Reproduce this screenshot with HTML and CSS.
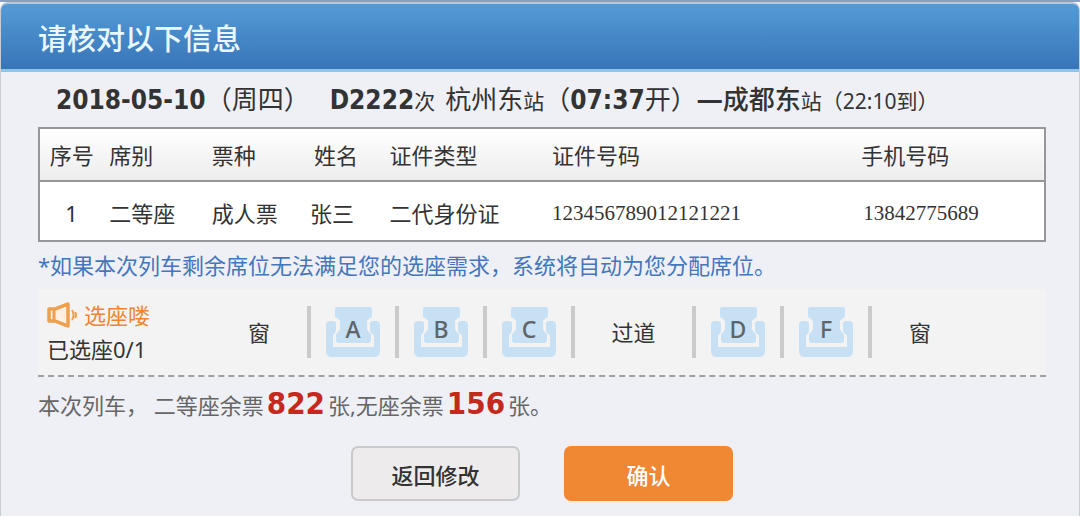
FILE: index.html
```html
<!DOCTYPE html>
<html lang="zh-CN">
  <head>
    <meta charset="UTF-8" />
    <title>请核对以下信息</title>
    <link rel="stylesheet" href="styles.css">
  </head>
  <body>
    <svg class="symbols" aria-hidden="true">
      <symbol id="seat" viewBox="0 0 54 50">
        <path d="M10 0h34q2 0 2 2v8q-4 2-5 4v8q1 3 4 5v6q0 3-3 3H13q-3 0-3-3v-6q3-2 4-5v-8q-1-2-5-4V2q0-2 2-2z" />
        <path d="M4 14h3q3 0 3 3v6q0 3-3 5v12h41V28q-4-2-4-5v-6q0-3 3-3h3q4 0 4 4v26q0 6-6 6H6q-6 0-6-6V18q0-4 4-4z" />
      </symbol>
    </svg>

    <main class="dialog">
      <h1 class="dialog-title">请核对以下信息</h1>

      <div class="dialog-body">
        <p class="train">
          <b>2018-05-10</b><span class="big">（周四）</span><b class="train-no">D2222</b><span>次</span>
          <span class="big from">杭州东</span><span>站</span><span class="big">（</span><b>07:37</b><span class="big">开）</span><span class="big dash">—</span><span class="big to">成都东</span><span>站（22:10到）</span>
        </p>

        <table class="passengers">
          <thead>
            <tr>
              <th class="col-no">序号</th>
              <th class="col-seat">席别</th>
              <th class="col-ticket">票种</th>
              <th class="col-name">姓名</th>
              <th class="col-type">证件类型</th>
              <th class="col-id">证件号码</th>
              <th>手机号码</th>
            </tr>
          </thead>
          <tbody>
            <tr>
              <td class="col-no">1</td>
              <td>二等座</td>
              <td>成人票</td>
              <td>张三</td>
              <td>二代身份证</td>
              <td class="number">123456789012121221</td>
              <td class="number phone">13842775689</td>
            </tr>
          </tbody>
        </table>

        <p class="notice">*如果本次列车剩余席位无法满足您的选座需求，系统将自动为您分配席位。</p>

        <section class="choose">
          <div class="choose-info">
            <p class="choose-title">
              <svg class="speaker" viewBox="0 0 30 26" aria-hidden="true">
                <path d="M2 7h6L21 2v22L8 19H2z" fill="#fdf0e0" />
                <path d="M2 7h6L21 2v22L8 19H2zM7 7v12" />
                <path class="wave" d="M25 8q3 5 0 10M28 10q2 3 0 6" />
              </svg>
              选座喽
            </p>
            <p>已选座0/1</p>
          </div>
          <div class="seats">
            <span class="window">窗</span>
            <div class="seat-group">
              <button type="button" class="seat"><svg aria-hidden="true"><use href="#seat" /></svg><span>A</span></button>
              <button type="button" class="seat"><svg aria-hidden="true"><use href="#seat" /></svg><span>B</span></button>
              <button type="button" class="seat"><svg aria-hidden="true"><use href="#seat" /></svg><span>C</span></button>
            </div>
            <span class="aisle">过道</span>
            <div class="seat-group">
              <button type="button" class="seat"><svg aria-hidden="true"><use href="#seat" /></svg><span>D</span></button>
              <button type="button" class="seat"><svg aria-hidden="true"><use href="#seat" /></svg><span>F</span></button>
            </div>
            <span class="window">窗</span>
          </div>
        </section>

        <p class="remain">本次列车， 二等座余票<strong>822</strong>张,无座余票<strong>156</strong>张。</p>

        <div class="buttons">
          <button type="button" class="btn">返回修改</button>
          <button type="button" class="btn btn-ok">确认</button>
        </div>
      </div>
    </main>

    <script>
      const seats = document.querySelectorAll('.seat');

      seats.forEach((seat) => {
        seat.addEventListener('click', () => {
          seats.forEach((other) => other.classList.remove('selected'));
          seat.classList.add('selected');
        });
      });
    </script>
  </body>
</html>
```
FILE: styles.css
```css
* {
  box-sizing: border-box;
}

body {
  margin: 0;
  background-color: #fff;
  border-top: 2px solid #8b9fbf;
  font-family: "Noto Sans", "Noto Sans CJK SC", sans-serif;
  font-size: 22px;
  line-height: 32px;
  color: #333;
}

p {
  margin: 0;
}

button {
  font-family: inherit;
  font-size: 22px;
  cursor: pointer;
}

.symbols {
  display: none;
}

.dialog {
  border: 1px solid #c8ccd4;
  border-top: 2px solid #b9c8d9;
  border-bottom: none;
  border-radius: 8px 8px 0 0;
  background-color: #eff0f6;
}

.dialog-title {
  margin: 0;
  padding: 4px 37px 0;
  border-bottom: 3px solid #8fc6e6;
  border-radius: 6px 6px 0 0;
  background: linear-gradient(#559bd6, #3775b8);
  color: #e9f8ff;
  font-size: 29px;
  font-weight: 500;
  line-height: 61px;
}

.dialog-body {
  padding: 8px 33px 15px 37px;
}

.train {
  display: flex;
  flex-wrap: wrap;
  align-items: baseline;
  padding-left: 18px;
  line-height: 38px;
  font-size: 21px;
}

.train b,
.remain strong {
  font-family: "DejaVu Sans Condensed", "DejaVu Sans", sans-serif;
}

.train b {
  font-size: 26px;
}

.big {
  font-size: 26px;
}

.train-no {
  margin-left: 20px;
}

.from {
  margin-left: 10px;
}

.dash {
  font-weight: bold;
}

.to {
  font-weight: 500;
}

.passengers {
  width: 100%;
  margin-top: 7px;
  border: 2px solid #97979b;
  border-spacing: 0;
  table-layout: fixed;
  background-color: #fff;
}

.passengers th,
.passengers td {
  padding: 0;
  font-weight: normal;
  text-align: left;
  white-space: nowrap;
}

.passengers thead {
  background: linear-gradient(#fff, #ececec);
}

.passengers th {
  height: 53px;
  border-bottom: 2px solid #97979b;
}

.passengers td {
  height: 58px;
  padding-top: 3px;
}

.passengers .col-no {
  width: 6.9%;
  padding-right: 6px;
  text-align: center;
}

.col-seat {
  width: 10.2%;
}

.col-ticket {
  width: 9.8%;
}

.passengers .col-name {
  width: 7.9%;
  padding-left: 4px;
}

.col-type {
  width: 16.2%;
}

.col-id {
  width: 30.8%;
}

.passengers .number {
  font-family: "Liberation Serif", serif;
  font-size: 21px;
}

.passengers .phone {
  padding-left: 2px;
}

.notice {
  margin-top: 7px;
  color: #4476bd;
}

.choose {
  display: flex;
  align-items: center;
  margin-top: 8px;
  padding: 9px 0 9px 9px;
  border-bottom: 2px dashed #a0a0a4;
  background-color: #f3f3f3;
}

.choose-info {
  width: 164px;
}

.choose-info p {
  line-height: 34px;
}

.choose-title {
  display: flex;
  align-items: center;
  gap: 7px;
  color: #ee8434;
}

.speaker {
  flex: none;
  width: 30px;
  height: 26px;
  fill: none;
  stroke: #eda04f;
  stroke-width: 3;
  stroke-linejoin: round;
}

.speaker .wave {
  stroke-width: 2;
}

.seats {
  display: flex;
  align-items: center;
}

.window {
  width: 96px;
  text-align: center;
}

.aisle {
  width: 117px;
  text-align: center;
}

.seat-group {
  display: flex;
  border-left: 4px solid #cbcbcb;
}

.seat {
  display: grid;
  place-items: center;
  width: 88px;
  height: 52px;
  padding: 0;
  border: none;
  border-right: 4px solid #cbcbcb;
  background: none;
}

.seat svg {
  grid-area: 1 / 1;
  width: 54px;
  height: 50px;
  fill: #c7e0f3;
}

.seat span {
  grid-area: 1 / 1;
  padding-bottom: 6px;
  color: #606468;
  font-size: 23px;
  font-weight: 500;
  line-height: 32px;
}

.seat.selected svg {
  fill: #f0a868;
}

.remain {
  margin-top: 6px;
  color: #666;
  line-height: 40px;
}

.remain strong {
  margin: 0 3px;
  color: #c5281c;
  font-size: 31px;
}

.buttons {
  display: flex;
  justify-content: center;
  gap: 44px;
  margin-top: 21px;
}

.btn {
  width: 169px;
  height: 55px;
  border: 2px solid #c9cacc;
  border-radius: 7px;
  background-color: #edebeb;
  color: #333;
  font-weight: 500;
}

.btn-ok {
  border-color: #ef8733;
  background-color: #ef8733;
  color: #fff;
}
```
